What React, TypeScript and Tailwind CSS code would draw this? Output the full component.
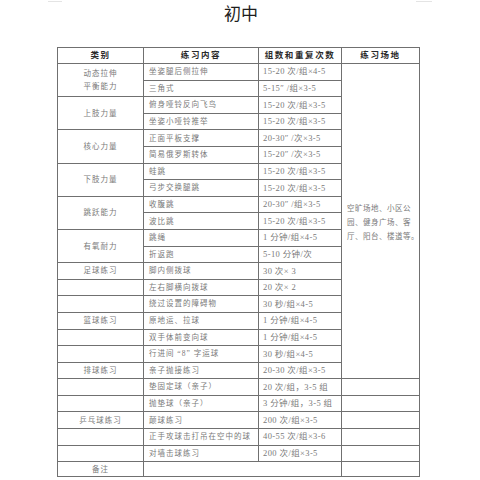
import React from 'react';

type Row = {
  cat?: string;
  span?: number;
  item: string;
  reps: string;
};

const rows: Row[] = [
  { cat: '动态拉伸\n平衡能力', span: 2, item: '坐姿腿后侧拉伸', reps: '15-20 次/组×4-5' },
  { item: '三角式', reps: '5-15″ /组×3-5' },
  { cat: '上肢力量', span: 2, item: '俯身哑铃反向飞鸟', reps: '15-20 次/组×3-5' },
  { item: '坐姿小哑铃推举', reps: '15-20 次/组×3-5' },
  { cat: '核心力量', span: 2, item: '正面平板支撑', reps: '20-30″ /次×3-5' },
  { item: '简易俄罗斯转体', reps: '15-20″ /次×3-5' },
  { cat: '下肢力量', span: 2, item: '蛙跳', reps: '15-20 次/组×3-5' },
  { item: '弓步交换腿跳', reps: '15-20 次/组×3-5' },
  { cat: '跳跃能力', span: 2, item: '收腹跳', reps: '20-30″ /组×3-5' },
  { item: '波比跳', reps: '15-20 次/组×3-5' },
  { cat: '有氧耐力', span: 2, item: '跳绳', reps: '1 分钟/组×4-5' },
  { item: '折返跑', reps: '5-10 分钟/次' },
  { cat: '足球练习', span: 1, item: '脚内侧拨球', reps: '30 次× 3' },
  { cat: '', span: 1, item: '左右脚横向拨球', reps: '20 次× 2' },
  { cat: '', span: 1, item: '绕过设置的障碍物', reps: '30 秒/组×4-5' },
  { cat: '篮球练习', span: 1, item: '原地运、拉球', reps: '1 分钟/组×4-5' },
  { cat: '', span: 1, item: '双手体前变向球', reps: '1 分钟/组×4-5' },
  { cat: '', span: 1, item: '行进间 “8” 字运球', reps: '30 秒/组×4-5' },
  { cat: '排球练习', span: 1, item: '亲子抛接练习', reps: '20-30 次/组×3-5' },
  { cat: '', span: 1, item: '垫固定球（亲子）', reps: '20 次/组，3-5 组' },
  { cat: '', span: 1, item: '抛垫球（亲子）', reps: '3 分钟/组，3-5 组' },
  { cat: '乒乓球练习', span: 1, item: '颠球练习', reps: '200 次/组×3-5' },
  { cat: '', span: 1, item: '正手攻球击打吊在空中的球', reps: '40-55 次/组×3-6' },
  { cat: '', span: 1, item: '对墙击球练习', reps: '200 次/组×3-5' },
];

const SITE_SPAN = 19;

const cell = 'border border-[#707070] p-0 align-middle';

export default function App() {
  return (
    <div
      className="w-[480px] h-[480px] bg-white overflow-hidden"
      style={{ fontFamily: '"Liberation Serif", "Noto Sans CJK SC", serif' }}
    >
      {/* faint page corner marks */}
      <div className="flex justify-between px-[48px] h-0">
        <div className="w-[14px] h-[2px] border-b border-[#e4e4e4]" />
        <div className="w-[16px] h-[2px] border-b border-[#e4e4e4]" />
      </div>

      <div className="h-[47px] pt-[3px] text-center">
        <span
          className="text-[17px] leading-[20px] text-[#1e1e1e] ml-[2px]"
          style={{ fontFamily: '"Noto Sans CJK SC", sans-serif' }}
        >
          初中
        </span>
      </div>

      <table className="ml-[57px] table-fixed border-collapse border-[1.5px] border-[#555] text-[#7a7a7a]">
        <colgroup>
          <col className="w-[86px]" />
          <col className="w-[115px]" />
          <col className="w-[83px]" />
          <col className="w-[74px]" />
        </colgroup>
        <thead>
          <tr className="h-[16px] text-[8.5px] font-bold text-[#2a2a2a] tracking-[1.6px]">
            <th className={`${cell} text-center`}>类别</th>
            <th className={`${cell} text-center`}>练习内容</th>
            <th className={`${cell} text-center`}>组数和重复次数</th>
            <th className={`${cell} text-center`}>练习场地</th>
          </tr>
        </thead>
        <tbody className="text-[7.5px] tracking-[1px]">
          {rows.map((r, i) => (
            <tr key={i} className="h-[16.6px]">
              {r.cat !== undefined && (
                <td rowSpan={r.span} className={`${cell} text-center leading-[13px] whitespace-pre-line`}>
                  {r.cat}
                </td>
              )}
              <td className={`${cell} pl-[5px] whitespace-nowrap`}>{r.item}</td>
              <td className={`${cell} pl-[4px] whitespace-nowrap tracking-[0.4px] text-[8.5px]`}>{r.reps}</td>
              {i === 0 && (
                <td
                  rowSpan={SITE_SPAN}
                  className={`${cell} pl-[5px] pt-[4px] leading-[14px] tracking-[0.5px] whitespace-pre`}
                >
                  {'空旷场地、小区公\n园、健身广场、客\n厅、阳台、楼道等。'}
                </td>
              )}
              {i >= SITE_SPAN && <td className={cell} />}
            </tr>
          ))}
          <tr className="h-[15px]">
            <td className={`${cell} text-center`}>备注</td>
            <td colSpan={2} className={cell} />
            <td className={cell} />
          </tr>
        </tbody>
      </table>
    </div>
  );
}
